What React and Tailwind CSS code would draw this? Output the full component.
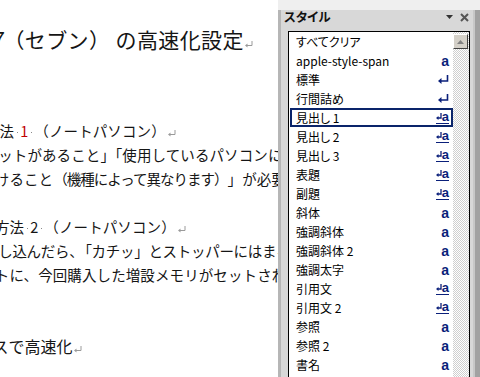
import React from 'react';

const NAVY = '#0a1f7a';

// Word's paragraph mark in the document (gray)
const ParaMark = ({ className = '' }) => (
  <svg width="8" height="7" viewBox="0 0 8 7" className={`shrink-0 ${className}`}>
    <path d="M7 0 V4.5 H2" stroke="#9a9a9a" strokeWidth="1" fill="none" />
    <path d="M0 4.5 L2.5 2.5 V6.5 Z" fill="#9a9a9a" />
  </svg>
);

// space marker (Word shows spaces as a small dot)
const Dot = () => (
  <span className="inline-flex w-[6px] justify-center">
    <span className="w-[1px] h-[1px] bg-[#8a8a8a] mt-[2px]" />
  </span>
);

const IconA = () => (
  <span className="font-['Liberation_Sans',sans-serif] font-bold text-[14px] leading-none text-[#0a1f7a]">a</span>
);

const IconPara = () => (
  <svg width="11" height="9" viewBox="0 0 11 9">
    <path d="M9.5 0 V6 H3" stroke={NAVY} strokeWidth="1.6" fill="none" />
    <path d="M0 6 L3.5 3 V9 Z" fill={NAVY} />
  </svg>
);

const IconParaA = () => (
  <span className="flex items-end border-b border-[#0a1f7a] leading-none pb-[1px]">
    <svg width="6" height="8" viewBox="0 0 6 8" className="mb-[1px]">
      <path d="M5 0 V5 H2" stroke={NAVY} strokeWidth="1.3" fill="none" />
      <path d="M0 5 L2.5 3 V7 Z" fill={NAVY} />
    </svg>
    <span className="font-['Liberation_Sans',sans-serif] font-bold text-[13px] leading-[10px] text-[#0a1f7a]">a</span>
  </span>
);

const styles = [
  { label: 'すべてクリア', icon: null },
  { label: 'apple-style-span', icon: 'a' },
  { label: '標準', icon: 'p' },
  { label: '行間詰め', icon: 'p' },
  { label: '見出し 1', icon: 'pa', selected: true },
  { label: '見出し 2', icon: 'pa' },
  { label: '見出し 3', icon: 'pa' },
  { label: '表題', icon: 'pa' },
  { label: '副題', icon: 'pa' },
  { label: '斜体', icon: 'a' },
  { label: '強調斜体', icon: 'a' },
  { label: '強調斜体 2', icon: 'a' },
  { label: '強調太字', icon: 'a' },
  { label: '引用文', icon: 'pa' },
  { label: '引用文 2', icon: 'pa' },
  { label: '参照', icon: 'a' },
  { label: '参照 2', icon: 'a' },
  { label: '書名', icon: 'a' },
];

function StyleRow({ label, icon, selected }) {
  return (
    <div
      className={`ml-[1px] h-[19px] shrink-0 flex items-center pl-[4px] pr-[2px] border-2 ${selected ? 'border-[#0a246a]' : 'border-transparent'}`}
    >
      <span className="text-[12px] text-black whitespace-nowrap [font-feature-settings:'palt']">{label}</span>
      <span className="ml-auto flex items-center">
        {icon === 'a' && <IconA />}
        {icon === 'p' && <IconPara />}
        {icon === 'pa' && <IconParaA />}
      </span>
    </div>
  );
}

export default function App() {
  return (
    <div className="w-[480px] h-[377px] overflow-hidden flex bg-white font-['Noto_Sans_CJK_JP',sans-serif]">
      {/* document */}
      <div className="w-[278px] shrink-0 overflow-hidden bg-white text-[#151515]">
        <div className="mt-[27px] h-[26px] flex items-center whitespace-nowrap text-[21px] tracking-[0.4px]">
          <span className="ml-[-12px] mr-[-6px]">７</span>
          （セブン） の高速化設定
          <ParaMark className="mt-[8px] ml-[1px]" />
        </div>

        <div className="mt-[66px] text-[14.5px] tracking-[0.1px]">
          <div className="h-[24px] flex items-center whitespace-nowrap ml-[-15px]">
            方法<Dot /><span className="text-[#c00000]">1</span><Dot />（ノートパソコン）
            <ParaMark className="mt-[4px] ml-[2px]" />
          </div>
          <div className="h-[24px] flex items-center whitespace-nowrap ml-[-31px]">
            スロットがあること」「使用しているパソコンにメモリ
          </div>
          <div className="h-[24px] flex items-center whitespace-nowrap ml-[-49px]">
            取り付けること<span className="tracking-[-1px]">（機種によって異なります）</span>」が必要になります
          </div>
          <div className="h-[24px]" />
          <div className="h-[24px] flex items-center whitespace-nowrap ml-[-5px]">
            方法<Dot /><span>2</span><Dot />（ノートパソコン）
            <ParaMark className="mt-[4px] ml-[2px]" />
          </div>
          <div className="h-[24px] flex items-center whitespace-nowrap ml-[-16px] tracking-[-0.3px]">
            差し込んだら<span className="mr-[-6px]">、</span>「カチッ」とストッパーにはまるまで
          </div>
          <div className="h-[24px] flex items-center whitespace-nowrap ml-[-49px]">
            スロットに、今回購入した増設メモリがセットされているか
          </div>
        </div>

        <div className="mt-[47px] h-[24px] flex items-center whitespace-nowrap text-[16px] ml-[-55px]">
          デバイスで高速化
          <ParaMark className="mt-[6px] ml-[1px]" />
        </div>
      </div>

      {/* divider */}
      <div className="w-[3px] shrink-0 flex flex-col">
        <div className="h-[10px] bg-[#efefef]" />
        <div className="flex-1 bg-[#b6b6b6]" />
      </div>

      {/* style pane */}
      <div className="w-[192px] shrink-0 flex flex-col bg-[#d8d8d8]">
        <div className="h-[10px] shrink-0 bg-[#efefef]" />
        <div className="h-[14px] shrink-0 flex items-center pl-[3px] pr-[4px]">
          <span className="font-bold text-[12.5px] text-[#111] [font-feature-settings:'palt']">スタイル</span>
          <svg width="7" height="4" viewBox="0 0 7 4" className="ml-auto">
            <path d="M0 0 H7 L3.5 4 Z" fill="#333" />
          </svg>
          <svg width="9" height="9" viewBox="0 0 9 9" className="ml-[7px]">
            <path d="M1 1 L8 8 M8 1 L1 8" stroke="#555" strokeWidth="2" />
          </svg>
        </div>
        <div className="h-[7px] shrink-0" />

        <div className="ml-[7px] mr-[3px] flex-1 flex border-l border-t border-r border-black bg-white overflow-hidden">
          <div className="w-[164px] shrink-0 flex flex-col">
            {styles.map((s) => (
              <StyleRow key={s.label} {...s} />
            ))}
          </div>
          <div className="w-[16px] shrink-0 flex flex-col bg-[repeating-conic-gradient(#cfcfcf_0%_25%,#ffffff_0%_50%)] bg-[length:2px_2px]">
            <div className="mt-[2px] h-[15px] w-[15px] flex items-center justify-center bg-[#d4d0c8] border border-t-white border-l-white border-b-[#404040] border-r-[#404040]">
              <svg width="7" height="4" viewBox="0 0 7 4">
                <path d="M3.5 0 L7 4 H0 Z" fill="#808080" />
              </svg>
            </div>
          </div>
        </div>
      </div>

      {/* window edge */}
      <div className="w-[7px] shrink-0 flex flex-col">
        <div className="h-[10px] bg-[#efefef]" />
        <div className="flex-1 flex">
          <div className="w-[2px] bg-[#c8c8c8]" />
          <div className="flex-1 bg-[#a2a2a2]" />
        </div>
      </div>
    </div>
  );
}
